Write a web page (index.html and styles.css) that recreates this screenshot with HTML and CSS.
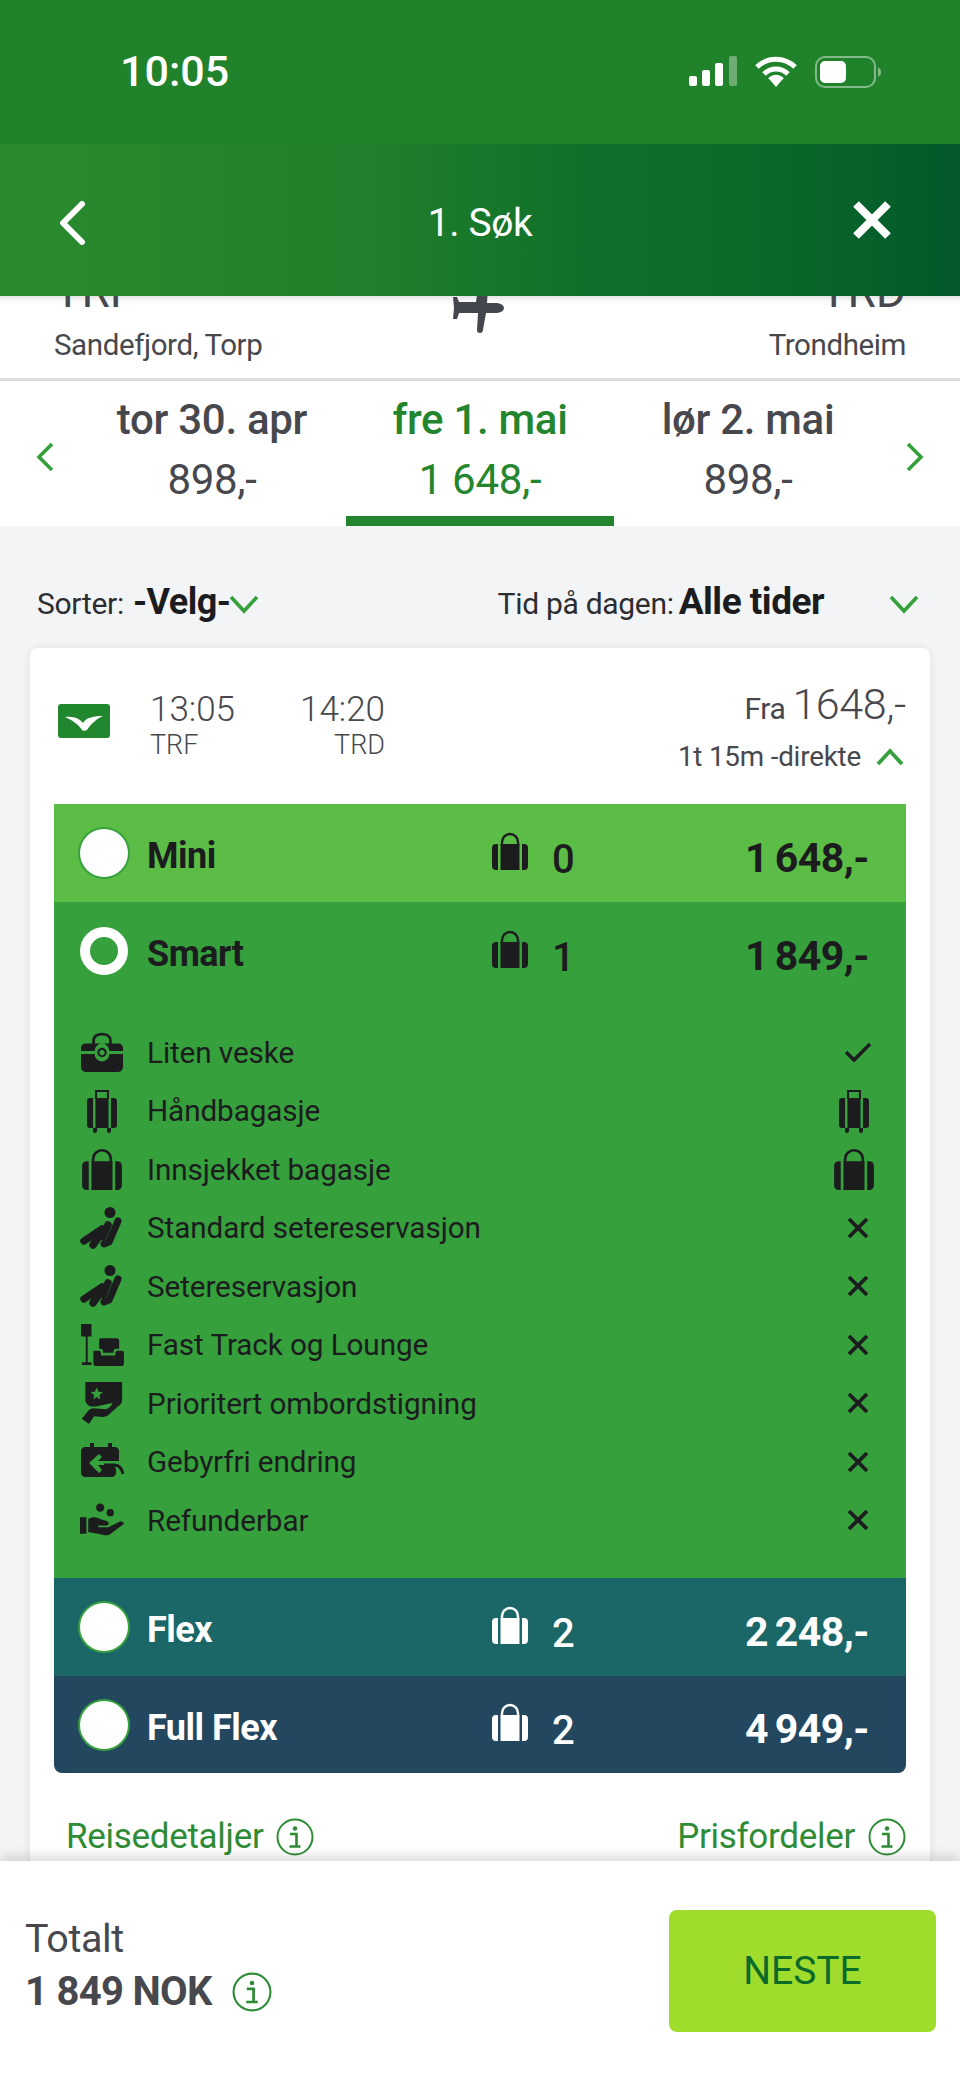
FILE: index.html
```html
<!DOCTYPE html>
<html>
<head>
<title>1. Søk</title>
<link rel="stylesheet" href="styles.css">
</head>
<body>

<!-- icons used more than once -->
<svg class="defs" width="0" height="0">
  <symbol id="bag" viewBox="0 0 36 38">
    <path d="M10 14V10a8 8 0 0 1 16 0v4" fill="none" stroke="currentColor" stroke-width="2.4"/>
    <path d="M6 12v26H4a4 4 0 0 1-4-4V16a4 4 0 0 1 4-4zM8.500 12h19v26h-19zM30 12h2a4 4 0 0 1 4 4v18a4 4 0 0 1-4 4h-2z" fill="currentColor"/>
  </symbol>
  <symbol id="trolley" viewBox="0 0 30 44">
    <path d="M9 10V2h12v8" fill="none" stroke="currentColor" stroke-width="2"/>
    <path d="M6 9v30H3a3 3 0 0 1-3-3V12a3 3 0 0 1 3-3zM8.500 9h13v30h-13zM24 9h3a3 3 0 0 1 3 3v24a3 3 0 0 1-3 3h-3zM6 39h4v3a2 2 0 0 1-4 0zM20 39h4v3a2 2 0 0 1-4 0z" fill="currentColor"/>
  </symbol>
  <symbol id="seat" viewBox="0 0 44 42">
    <circle cx="30" cy="5.500" r="5.500" fill="currentColor"/>
    <path d="M38 14L29 35l-5 2" fill="none" stroke="currentColor" stroke-width="7" stroke-linecap="round" stroke-linejoin="round"/>
    <path d="M28 18l-5 12M22 22L4 34M20 28l-7 10" fill="none" stroke="currentColor" stroke-width="7.500" stroke-linecap="round"/>
  </symbol>
  <symbol id="cross" viewBox="0 0 24 24">
    <path d="M3 3l18 18M21 3L3 21" fill="none" stroke="currentColor" stroke-width="3.800"/>
  </symbol>
  <symbol id="info" viewBox="0 0 38 38">
    <circle cx="19" cy="19" r="17.500" fill="none" stroke="currentColor" stroke-width="2"/>
    <circle cx="19" cy="10.500" r="2.200" fill="currentColor"/>
    <path d="M14 16h6.500v12M13.500 28.500h11" fill="none" stroke="currentColor" stroke-width="2.600"/>
  </symbol>
</svg>

<header class="topbar">
  <div class="status">
    <span class="clock">10:05</span>
    <div class="status-icons">
      <svg class="signal" viewBox="0 0 48 30">
        <rect x="0" y="20" width="8" height="10" rx="2" fill="#fff"/>
        <rect x="13" y="14" width="8" height="16" rx="2" fill="#fff"/>
        <rect x="26" y="7" width="8" height="23" rx="2" fill="#fff"/>
        <rect x="40" y="0" width="8" height="30" rx="2" fill="#fff" opacity=".35"/>
      </svg>
      <svg class="wifi" viewBox="0 0 42 31">
        <path d="M2 11a27 27 0 0 1 38 0M9 18a17 17 0 0 1 24 0M15 24a8 8 0 0 1 12 0" fill="none" stroke="#fff" stroke-width="5"/>
        <path d="M21 31l-5-6a7 7 0 0 1 10 0z" fill="#fff"/>
      </svg>
      <svg class="battery" viewBox="0 0 66 32">
        <rect x="1" y="1" width="59" height="30" rx="9" fill="none" stroke="#fff" stroke-opacity=".45" stroke-width="2"/>
        <rect x="5" y="5" width="26" height="22" rx="5" fill="#fff"/>
        <path d="M63 11c2 1 3 3 3 5s-1 4-3 5z" fill="#fff" fill-opacity=".45"/>
      </svg>
    </div>
  </div>
  <div class="navbar">
    <svg class="nav-back" viewBox="0 0 28 44"><path d="M24 3L5 22l19 19" fill="none" stroke="#fff" stroke-width="6" stroke-linecap="round" stroke-linejoin="round"/></svg>
    <span class="nav-title">1. Søk</span>
    <svg class="nav-close" viewBox="0 0 40 40"><path d="M4 4l32 32M36 4L4 36" fill="none" stroke="#fff" stroke-width="8"/></svg>
  </div>
</header>

<main class="content">

  <section class="route">
    <div class="route-codes">
      <span>TRF</span>
      <svg class="plane" viewBox="0 0 52 48"><path d="M33 0c2 0 3 1 3 3l-1 15h8c5 0 9 2 9 5s-4 5-9 5h-9l-3 17c0 2-2 3-3 3-2 0-3-1-3-3l1-17H7l-2 6H1l1-11-1-11h4l2 5h17l2-14c0-2 3-3 7-3z" fill="#44474d"/></svg>
      <span>TRD</span>
    </div>
    <div class="route-names">
      <span>Sandefjord, Torp</span>
      <span>Trondheim</span>
    </div>
  </section>

  <nav class="dates">
    <svg class="date-arrow" viewBox="0 0 18 30"><path d="M16 2L3 15l13 13" fill="none" stroke="#35a03c" stroke-width="3.600"/></svg>
    <div class="date">
      <span class="date-day">tor 30. apr</span>
      <span class="date-price">898,-</span>
    </div>
    <div class="date active">
      <span class="date-day">fre 1. mai</span>
      <span class="date-price">1 648,-</span>
    </div>
    <div class="date">
      <span class="date-day">lør 2. mai</span>
      <span class="date-price">898,-</span>
    </div>
    <svg class="date-arrow date-arrow-next" viewBox="0 0 18 30"><path d="M2 2l13 13L2 28" fill="none" stroke="#35a03c" stroke-width="3.600"/></svg>
  </nav>

  <div class="filters">
    <div class="filter">
      <span>Sorter:</span><b class="velg">-Velg-</b>
      <svg class="chev" viewBox="0 0 30 20"><path d="M2 3l13 14L28 3" fill="none" stroke="#35a03c" stroke-width="3.600"/></svg>
    </div>
    <div class="filter">
      <span>Tid på dagen:</span><b class="alle">Alle tider</b>
      <svg class="chev chev-far" viewBox="0 0 30 20"><path d="M2 3l13 14L28 3" fill="none" stroke="#35a03c" stroke-width="3.600"/></svg>
    </div>
  </div>

  <article class="card">
    <div class="flight">
      <svg class="logo" viewBox="0 0 52 34">
        <rect width="52" height="34" rx="3" fill="#20872e"/>
        <path d="M7 13c8-1 14 1 18 6 3-5 9-7 20-7-7 3-12 8-16 14-2 1-4 1-5 0-4-6-10-10-17-13z" fill="#fff"/>
      </svg>
      <div class="times">
        <div class="time"><span class="clock-time">13:05</span><span class="iata">TRF</span></div>
        <div class="time time-end"><span class="clock-time">14:20</span><span class="iata">TRD</span></div>
      </div>
      <div class="flight-side">
        <div class="from"><span>Fra</span> <span class="from-price">1648,-</span></div>
        <div class="duration">
          <span>1t 15m -direkte</span>
          <svg class="chev-up" viewBox="0 0 30 20"><path d="M3 17L15 4l12 13" fill="none" stroke="#35a03c" stroke-width="3.800"/></svg>
        </div>
      </div>
    </div>

    <div class="plans">
      <div class="plan plan-mini">
        <div class="plan-row">
          <span class="radio"></span>
          <span class="plan-name">Mini</span>
          <svg class="plan-bag"><use href="#bag"/></svg>
          <span class="plan-count">0</span>
          <span class="plan-price">1 648,-</span>
        </div>
      </div>

      <div class="plan plan-smart">
        <div class="plan-row">
          <span class="radio radio-on"></span>
          <span class="plan-name">Smart</span>
          <svg class="plan-bag"><use href="#bag"/></svg>
          <span class="plan-count">1</span>
          <span class="plan-price">1 849,-</span>
        </div>
        <ul class="features">
          <li>
            <svg class="ficon" viewBox="0 0 40 40">
              <path d="M12 13V9c0-8 16-8 16 0v4" fill="none" stroke="currentColor" stroke-width="2.600"/>
              <path d="M4 12h32c2 0 4 2 4 4v3H27a7 7 0 0 0-14 0H0v-3c0-2 2-4 4-4zM0 22h13a7 7 0 0 0 14 0h13v12c0 3-2 5-5 5H5c-3 0-5-2-5-5z" fill="currentColor"/>
              <circle cx="20" cy="20.500" r="3.500" fill="none" stroke="currentColor" stroke-width="2"/>
            </svg>
            <span>Liten veske</span>
            <svg class="fmark fmark-check" viewBox="0 0 28 22"><path d="M2 11l8 8L26 3" fill="none" stroke="currentColor" stroke-width="3.400"/></svg>
          </li>
          <li>
            <svg class="ficon ficon-trolley"><use href="#trolley"/></svg>
            <span>Håndbagasje</span>
            <svg class="fmark ficon-trolley"><use href="#trolley"/></svg>
          </li>
          <li>
            <svg class="ficon ficon-bag"><use href="#bag"/></svg>
            <span>Innsjekket bagasje</span>
            <svg class="fmark ficon-bag"><use href="#bag"/></svg>
          </li>
          <li>
            <svg class="ficon ficon-seat"><use href="#seat"/></svg>
            <span>Standard setereservasjon</span>
            <svg class="fmark fmark-x"><use href="#cross"/></svg>
          </li>
          <li>
            <svg class="ficon ficon-seat"><use href="#seat"/></svg>
            <span>Setereservasjon</span>
            <svg class="fmark fmark-x"><use href="#cross"/></svg>
          </li>
          <li>
            <svg class="ficon" viewBox="0 0 46 44">
              <path d="M1 0h11v13H8v27h4v3H2v-3h4V13H1z" fill="currentColor"/>
              <path d="M21 15h17c2 0 3 1 3 3v8h-3c-2 0-3 1-3 3v1H24v-1c0-2-1-3-3-3h-1v-8c0-2 0-3 1-3z" fill="currentColor"/>
              <path d="M15 28h5c1 0 2 1 2 3v2h15v-2c0-2 1-3 2-3h5c1 0 2 1 2 2v11c0 2-1 3-3 3H17c-2 0-3-1-3-3V30c0-1 0-2 1-2z" fill="currentColor"/>
            </svg>
            <span>Fast Track og Lounge</span>
            <svg class="fmark fmark-x"><use href="#cross"/></svg>
          </li>
          <li>
            <svg class="ficon" viewBox="0 0 48 48">
              <path d="M5 0h42v20c0 4-2 7-6 8l-8 2 3-6-6 1-13 3c-3 0-6 0-8-1-2-1-3-3-4-5z" fill="currentColor"/>
              <path d="M18 6l2 5 5 .5-4 3.500 1 5-4-3-4 3 1-5-4-3.500 5-.5z" fill="#35a03c"/>
              <path d="M14 30l15 1 11-7c2-1 4 1 3 3L31 38c-2 1-4 2-6 2l-10-1-6 9-8-6 7-9c2-2 4-3 6-3z" fill="currentColor"/>
            </svg>
            <span>Prioritert ombordstigning</span>
            <svg class="fmark fmark-x"><use href="#cross"/></svg>
          </li>
          <li>
            <svg class="ficon" viewBox="0 0 44 38">
              <path d="M10 0h4v4h14V0h4v4h3c2 0 4 2 4 4v10H18l4-4-3-3-10 9 10 10 3-3-4-5h14c2 0 3 2 4 4v4c0 2-2 4-4 4H5c-2 0-4-2-4-4V8c0-2 2-4 4-4h5z" fill="currentColor"/>
              <path d="M24 22h10c5 0 8 4 9 9" fill="none" stroke="currentColor" stroke-width="3"/>
            </svg>
            <span>Gebyrfri endring</span>
            <svg class="fmark fmark-x"><use href="#cross"/></svg>
          </li>
          <li>
            <svg class="ficon" viewBox="0 0 48 36">
              <circle cx="22" cy="4.500" r="4.500" fill="currentColor"/>
              <circle cx="33" cy="10" r="4" fill="currentColor"/>
              <path d="M0 15h7v18H0zM9 17c5-3 9-2 13 0l7 2c3 1 3 5 0 5h-9v2h11l12-6c3-1 6 1 4 3L32 34c-2 1-5 1-7 0l-16-3z" fill="currentColor"/>
            </svg>
            <span>Refunderbar</span>
            <svg class="fmark fmark-x"><use href="#cross"/></svg>
          </li>
        </ul>
      </div>

      <div class="plan plan-flex">
        <div class="plan-row">
          <span class="radio"></span>
          <span class="plan-name">Flex</span>
          <svg class="plan-bag"><use href="#bag"/></svg>
          <span class="plan-count">2</span>
          <span class="plan-price">2 248,-</span>
        </div>
      </div>

      <div class="plan plan-full">
        <div class="plan-row">
          <span class="radio"></span>
          <span class="plan-name">Full Flex</span>
          <svg class="plan-bag"><use href="#bag"/></svg>
          <span class="plan-count">2</span>
          <span class="plan-price">4 949,-</span>
        </div>
      </div>
    </div>

    <div class="card-links">
      <a class="card-link link-left">Reisedetaljer <svg class="info"><use href="#info"/></svg></a>
      <a class="card-link">Prisfordeler <svg class="info"><use href="#info"/></svg></a>
    </div>
  </article>

</main>

<footer class="total">
  <div class="total-text">
    <span class="total-label">Totalt</span>
    <div class="total-sum">1 849 NOK <svg class="info info-big"><use href="#info"/></svg></div>
  </div>
  <button class="next">NESTE</button>
</footer>

</body>
</html>
```

FILE: styles.css
```css
* {
  box-sizing: border-box;
}

html, body {
  height: 100%;
}

body {
  margin: 0;
  height: 2081px;
  overflow: hidden;
  display: flex;
  flex-direction: column;
  background-color: #f2f4f6;
  color: #47484d;
  font-family: Roboto, "Liberation Sans", sans-serif;
}

.defs {
  display: block;
  height: 0;
}

/* green bars on top */
.topbar {
  flex: none;
  position: relative;
  z-index: 2;
  color: #fff;
}

.status {
  height: 144px;
  padding: 47px 79px 0 120px;
  display: flex;
  justify-content: space-between;
  background-color: #20822a;
}

.clock {
  font-size: 43px;
  line-height: 48px;
  font-weight: 500;
}

.status-icons {
  display: flex;
  gap: 18px;
  padding-top: 9px;
}

.signal {
  width: 48px;
  height: 30px;
}

.wifi {
  width: 42px;
  height: 31px;
}

.battery {
  width: 66px;
  height: 32px;
}

.navbar {
  height: 152px;
  padding: 0 58px;
  display: grid;
  grid-template-columns: 1fr auto 1fr;
  align-items: center;
  background: linear-gradient(90deg, #2a8b2e 0%, #20802b 38%, #0f6f2a 62%, #0a6a2a 78%, #03592a 100%);
}

.nav-back {
  width: 28px;
  height: 44px;
  margin-top: 5px;
}

.nav-title {
  font-size: 39px;
  line-height: 48px;
  margin-top: 5px;
  letter-spacing: -.4px;
}

.nav-close {
  width: 40px;
  height: 40px;
  justify-self: end;
  margin-right: 10px;
}

/* this part is scrolled under the header, so it gets cut on top */
.content {
  flex: 1;
  min-height: 0;
  overflow: hidden;
}

.route {
  height: 82px;
  padding: 0 54px 0 54px;
  display: flex;
  flex-direction: column;
  justify-content: flex-end;
  background-color: #fff;
  box-shadow: inset 0 8px 6px -6px rgba(0, 0, 0, .15);
}

.route-codes {
  display: flex;
  justify-content: space-between;
  align-items: flex-end;
  font-size: 46px;
  line-height: 46px;
  margin-bottom: 13px;
}

.plane {
  width: 52px;
  height: 48px;
  margin-bottom: -19px;
}

.route-names {
  display: flex;
  justify-content: space-between;
  font-size: 29.5px;
  line-height: 36px;
  margin-bottom: 15px;
  letter-spacing: -.4px;
}

.dates {
  height: 148px;
  border-top: 3px solid #dcdde0;
  padding: 0 36px;
  display: flex;
  align-items: center;
  background-color: #fff;
}

.date-arrow {
  flex: none;
  width: 18px;
  height: 30px;
  margin-top: 6px;
}

.date-arrow-next {
  margin-left: auto;
}

.date {
  width: 268px;
  height: 145px;
  display: flex;
  flex-direction: column;
  align-items: center;
  padding-top: 9px;
  font-size: 42px;
  line-height: 60px;
  border-bottom: 10px solid transparent;
}

.dates .date:nth-of-type(1) {
  margin-left: 24px;
}

.date-day {
  font-weight: 500;
  letter-spacing: -.3px;
}

.date-price {
  letter-spacing: -.3px;
}

.date.active {
  color: #23852d;
  border-bottom-color: #23852d;
}

.filters {
  height: 122px;
  padding: 56px 41px 0 37px;
  display: flex;
  justify-content: space-between;
}

.filter {
  display: flex;
  align-items: baseline;
  height: 40px;
  font-size: 30px;
  line-height: 40px;
  color: #2c2d30;
  letter-spacing: -.3px;
}

.filter b {
  font-size: 36px;
  font-weight: 700;
  color: #1c1c1e;
  margin-left: 9px;
  letter-spacing: -.5px;
}

.filter .alle {
  font-size: 37px;
  margin-left: 5px;
}

.chev {
  width: 30px;
  height: 20px;
  margin-left: -2px;
}

.chev-far {
  margin-left: 65px;
}

.card {
  margin: 0 30px;
  height: 1300px;
  background-color: #fff;
  border-radius: 8px;
  box-shadow: 0 0 10px rgba(0, 0, 0, .08);
  padding: 0 24px;
}

.flight {
  height: 156px;
  display: flex;
}

.logo {
  flex: none;
  width: 52px;
  height: 34px;
  margin: 56px 0 0 4px;
}

.times {
  display: flex;
  gap: 69px;
  margin: 43px 0 0 40px;
}

.time {
  display: flex;
  flex-direction: column;
  width: 83px;
}

.time-end {
  align-items: flex-end;
}

.clock-time {
  font-size: 35px;
  line-height: 38px;
  font-weight: 300;
}

.iata {
  font-size: 27px;
  line-height: 32px;
  font-weight: 300;
}

.flight-side {
  margin-left: auto;
  display: flex;
  flex-direction: column;
  align-items: flex-end;
  padding-top: 34px;
}

.from {
  font-size: 30px;
  line-height: 44px;
  letter-spacing: -.4px;
}

.from-price {
  font-size: 43px;
  font-weight: 300;
}

.duration {
  display: flex;
  align-items: center;
  gap: 14px;
  margin-top: 9px;
  font-size: 27.8px;
  line-height: 34px;
  letter-spacing: -.2px;
}

.chev-up {
  width: 30px;
  height: 20px;
  margin-right: 1px;
}

/* fare table */
.plans {
  border-radius: 0 0 8px 8px;
  overflow: hidden;
  color: #1c1c1e;
}

.plan-row {
  height: 98px;
  padding: 0 37px 0 26px;
  display: flex;
  align-items: center;
}

.plan-mini {
  background-color: #5bbd46;
}

.plan-smart {
  background-color: #35a03c;
  height: 676px;
}

.plan-flex {
  background-color: #1b6768;
  color: #fff;
}

.plan-full {
  background-color: #22475f;
  color: #fff;
}

.plan-full .plan-row {
  height: 97px;
}

.radio {
  flex: none;
  width: 48px;
  height: 48px;
  border-radius: 50%;
  background-color: #fff;
  box-shadow: 0 0 0 2px #35a03c;
}

.radio-on {
  background-color: #35a03c;
  border: 10px solid #fff;
  box-shadow: none;
}

.plan-name {
  width: 345px;
  margin-left: 19px;
  margin-top: 6px;
  font-size: 36px;
  line-height: 40px;
  font-weight: 700;
  letter-spacing: -.5px;
}

.plan-bag {
  flex: none;
  width: 36px;
  height: 38px;
  margin-top: -5px;
}

.plan-count {
  margin-left: 24px;
  margin-top: 12px;
  font-size: 40px;
  font-weight: 500;
}

.plan-price {
  margin-left: auto;
  margin-top: 9px;
  font-size: 41px;
  font-weight: 700;
  letter-spacing: -.5px;
  word-spacing: -3px;
}

.features {
  list-style: none;
  margin: 0;
  padding: 23px 0 0 0;
}

.features li {
  height: 58.500px;
  padding-left: 26px;
  padding-right: 34px;
  display: flex;
  align-items: center;
  font-size: 29.7px;
  letter-spacing: -.1px;
}

.features li span {
  margin-right: auto;
}

.features li .ficon + span {
  margin-left: 23px;
}

.ficon {
  flex: none;
  width: 44px;
  height: 42px;
}

.ficon-trolley {
  width: 30px;
  height: 44px;
}

.ficon.ficon-trolley {
  margin: 0 7px;
}

.ficon-bag {
  width: 40px;
  height: 42px;
}

.ficon.ficon-bag {
  margin: 0 2px;
}

.ficon-seat {
  width: 44px;
  height: 42px;
}

.fmark {
  flex: none;
}

.fmark-check {
  width: 28px;
  height: 22px;
}

.fmark-x {
  width: 24px;
  height: 24px;
  margin-right: 2px;
}

.fmark.ficon-trolley {
  margin-right: 3px;
}

.fmark.ficon-bag {
  margin-right: -2px;
}

.card-links {
  display: flex;
  justify-content: space-between;
  padding: 43px 0 0 12px;
  color: #2e8b36;
  font-size: 35px;
  letter-spacing: -.3px;
}

.card-link {
  display: flex;
  align-items: center;
  gap: 13px;
}

.info {
  width: 38px;
  height: 38px;
  color: #2e8b36;
}

.info-big {
  margin-left: 20px;
  width: 40px;
  height: 40px;
}

.total {
  flex: none;
  position: relative;
  z-index: 2;
  height: 220px;
  padding: 49px 24px 0 25px;
  display: flex;
  justify-content: space-between;
  background-color: #fff;
  box-shadow: 0 -6px 10px rgba(0, 0, 0, .12);
}

.total-text {
  padding-top: 5px;
}

.total-label {
  display: block;
  font-size: 39.5px;
  line-height: 48px;
  letter-spacing: -.4px;
}

.total-sum {
  display: flex;
  align-items: center;
  margin-top: 5px;
  font-size: 40px;
  line-height: 48px;
  font-weight: 700;
  letter-spacing: -.7px;
}

.next {
  width: 267px;
  height: 122px;
  border: 0;
  border-radius: 8px;
  background-color: #a0dc2b;
  color: #0a6a2a;
  font-family: inherit;
  font-size: 39px;
}
```
